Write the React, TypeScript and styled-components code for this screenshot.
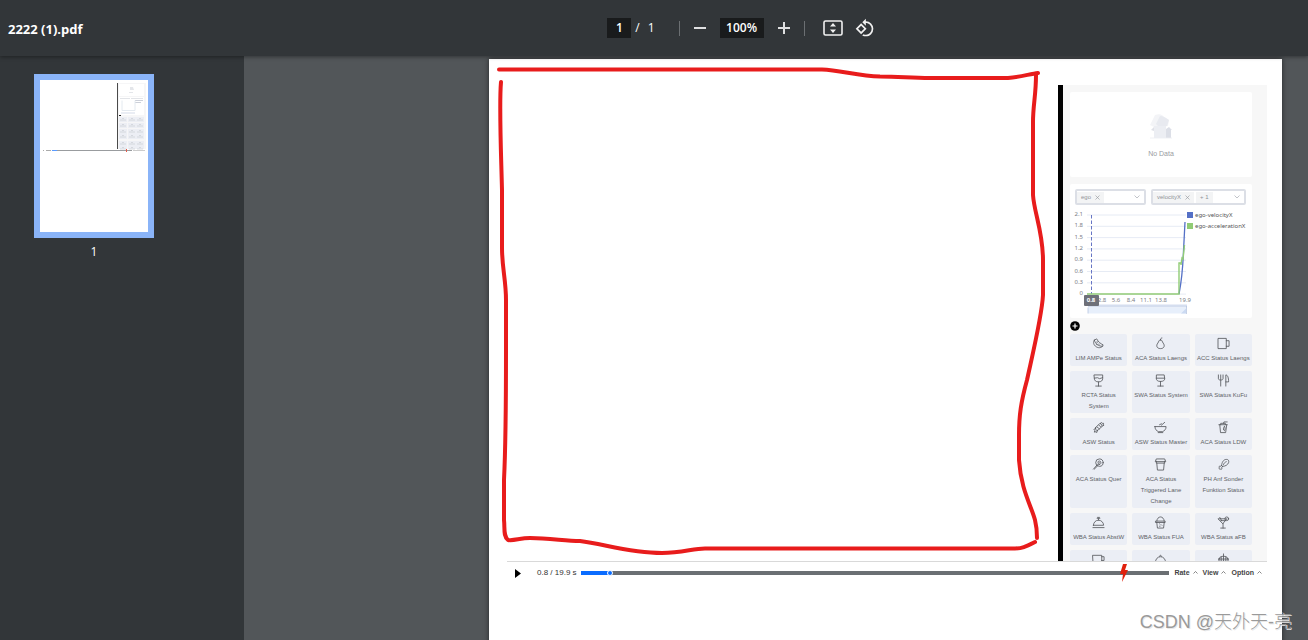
import React from "react";
import styled, { createGlobalStyle } from "styled-components";

const GlobalStyle = createGlobalStyle`
  * { box-sizing: border-box; }
  body { margin: 0; background: #525659; font-family: "Open Sans", "Noto Sans", sans-serif; }
  button, input, select { font: inherit; color: inherit; margin: 0; padding: 0; border: 0; background: none; }
  button { cursor: pointer; }
  svg { display: block; }
`;

const Shell = styled.div`
  position: relative;
  display: flex;
  flex-direction: column;
  height: 100vh;
  overflow: hidden;
`;

/* ---------- viewer toolbar ---------- */

const Toolbar = styled.header`
  position: relative;
  z-index: 3;
  flex: none;
  display: grid;
  grid-template-columns: 46% auto 1fr;
  align-items: center;
  height: 56px;
  padding: 0 8px;
  background: #323639;
  color: #fff;
  box-shadow: 0 1px 4px rgba(0, 0, 0, 0.4);
`;

const FileName = styled.h1`
  margin: 0;
  padding-top: 2px;
  font-size: 13px;
  line-height: 20px;
  font-weight: 700;
`;

const Controls = styled.div`
  display: flex;
  align-items: center;
  padding-left: 5px;
  font-size: 12px;
  line-height: 20px;
`;

const ToolInput = styled.input<{ $width: number }>`
  && {
    width: ${(p) => p.$width}px;
    height: 20px;
    background: #191b1c;
    text-align: center;
    font-weight: 600;
  }
`;

const PageTotal = styled.span`
  display: flex;
  gap: 8px;
  padding-left: 4px;
`;

const ToolDivider = styled.span<{ $left: number; $right: number }>`
  width: 1px;
  height: 15px;
  margin: 0 ${(p) => p.$right}px 0 ${(p) => p.$left}px;
  background: #6b6f72;
`;

const ToolButton = styled.button<{ $before?: number; $after?: number }>`
  && {
    display: grid;
    place-items: center;
    width: 20px;
    height: 20px;
    margin: 0 ${(p) => p.$after ?? 0}px 0 ${(p) => p.$before ?? 0}px;
  }
`;

/* ---------- viewer body ---------- */

const Body = styled.div`
  flex: 1;
  min-height: 0;
  display: flex;
`;

const Sidebar = styled.aside`
  flex: none;
  width: 244px;
  padding: 18px 34px;
  background: #323639;
`;

const Thumbnail = styled.button`
  && {
    display: block;
    width: 120px;
    color: #fff;
    font-size: 12px;
    line-height: 16px;
  }
`;

const ThumbFrame = styled.span`
  display: block;
  height: 164px;
  margin-bottom: 6px;
  border: 6px solid #8ab4f8;
  background: #fff;
`;

const Viewer = styled.main`
  flex: 1;
  min-width: 0;
  padding: 3px 26px 0 245px;
  overflow: hidden;
`;

const Page = styled.article`
  position: relative;
  min-height: 1123px;
  padding: 26px 15px 0 18px;
  background: #fff;
  box-shadow: 0 0 5px rgba(0, 0, 0, 0.55);
  font-family: "Liberation Sans", Arial, sans-serif;
`;

const Annotation = styled.svg`
  position: absolute;
  z-index: 1;
  top: 0;
  left: 0;
  pointer-events: none;
`;

const Workspace = styled.section`
  display: flex;
  height: 477px;
  border-bottom: 1px solid #d9d9d9;
  overflow: hidden;
`;

const Scene = styled.div`
  flex: 1;
`;

const Panel = styled.div`
  flex: none;
  display: flex;
  flex-direction: column;
  width: 209px;
  height: 530px;
  padding: 7px 15px 0 7px;
  border-left: 5px solid #000;
  background: #f7f7f7;
`;

const Card = styled.div<{ $height: number }>`
  flex: none;
  height: ${(p) => p.$height}px;
  margin-bottom: 7px;
  border-radius: 2px;
  background: #fff;
`;

const Empty = styled.div`
  display: flex;
  flex-direction: column;
  align-items: center;
  gap: 10px;
  padding-top: 21px;
  color: #999ca1;
  font-size: 7px;
  line-height: 10px;
`;

const Filters = styled.div`
  display: grid;
  grid-template-columns: 71px 95px;
  gap: 5px;
  padding: 5px 5px 3px;
`;

const TagSelect = styled.div`
  display: flex;
  align-items: center;
  height: 16px;
  border: 2px solid #dcdfe6;
  border-radius: 2px;
  font-size: 6px;
  line-height: 11px;
  color: #909399;
`;

const Tag = styled.span<{ $gap?: number }>`
  display: flex;
  align-items: center;
  gap: 4px;
  height: 11px;
  margin-right: ${(p) => p.$gap ?? 0}px;
  padding: 0 4px;
  background: #f3f4f5;
`;

const TagClose = styled.button`
  display: grid;
  place-items: center;
`;

const Picker = styled.select`
  && {
    flex: 1;
    min-width: 0;
    height: 12px;
    appearance: none;
  }
`;

const PickerArrow = styled.svg`
  flex: none;
  margin-right: 4px;
  pointer-events: none;
`;

const AddRow = styled.div`
  display: flex;
  height: 9px;
  margin: -5px 0 5px;
  padding-top: 1px;
`;

const AddButton = styled.button`
  width: 10px;
  height: 10px;
`;

const Tiles = styled.div`
  display: grid;
  grid-template-columns: repeat(3, 1fr);
  gap: 5px;
`;

const Tile = styled.button`
  && {
    display: flex;
    flex-direction: column;
    align-items: center;
    justify-content: flex-start;
    gap: 3px;
    min-height: 32px;
    padding: 3px 1px 1px;
    border-radius: 2px;
    background: #ebeef5;
    color: #606266;
    font-size: 6px;
    line-height: 11px;
  }
`;

/* ---------- playback bar ---------- */

const Player = styled.footer`
  display: flex;
  align-items: center;
  height: 22px;
  padding: 0 5px 0 8px;
  color: #333;
  font-size: 7px;
  line-height: 12px;
`;

const PlayButton = styled.button`
  width: 6px;
  height: 9px;
`;

const Clock = styled.span`
  width: 60px;
  padding-left: 16px;
  font-size: 8px;
  white-space: nowrap;
`;

const Timeline = styled.div`
  position: relative;
  flex: 1;
  display: flex;
  align-items: center;
  height: 22px;
`;

const Seek = styled.input`
  && {
    width: 100%;
    height: 8px;
    appearance: none;
    background: linear-gradient(to right, #0a6cff 5%, #6b6f73 5%) center / 100% 4px no-repeat;
  }
  &::-webkit-slider-thumb {
    appearance: none;
    width: 6px;
    height: 6px;
    border: 1px solid #fff;
    border-radius: 50%;
    background: #0a6cff;
  }
`;

const EventMarker = styled.svg`
  position: absolute;
  top: 2px;
  left: 92%;
  margin-left: -2px;
`;

const MenuButton = styled.button`
  && {
    display: flex;
    align-items: center;
    gap: 3px;
    margin-left: 5px;
    font-weight: 700;
    color: #444;
  }
`;

const Watermark = styled.div`
  position: absolute;
  z-index: 4;
  right: 16px;
  bottom: 6px;
  color: #9a9a9a;
  font-family: "Liberation Sans", "Noto Sans CJK SC", sans-serif;
  font-size: 18px;
  font-weight: 300;
  line-height: 24px;
  text-shadow: 1px 1px 0 #e8e8e8;
`;

/* ---------- data ---------- */

const icons: Record<string, React.ReactNode> = {
  melon: <path d="M2.500 3.500 5 2c2 3.500 4 5 7 6.500-1 3-4.500 4-7.500 2S1 5.500 2.500 3.500Zm0 0C4 8 7 10 11.500 10M5.500 5v1M7.500 7.500v.5M5 8h.5" />,
  pear: <path d="M7 3c-1.800 0-1.800 2-2.800 3.500C2 9 2.800 12.500 7 12.500S12 9 9.800 6.500C8.800 5 8.800 3 7 3Zm0 0c0-1 .5-2 1.500-2" />,
  mug: <path d="M1.500 1.500h8.500v11H1.500ZM10 4h3v6h-3" />,
  goblet: <path d="M2.500 1h9v4c0 2-1.500 3.500-4.500 3.500S2.500 7 2.500 5ZM2.500 4.500 6 4l2 1 3.500-1M7 8.500V13M4 13h6" />,
  glass: <path d="M3 1h8l.5 4c0 2-1.500 3-4.500 3S2.500 7 2.500 5ZM2.500 4.500h9M7 8v5M4 13h6" />,
  cutlery: <path d="M1.500 1v4c0 1 1 1.500 2.500 1.500S6.500 6 6.500 5V1M4 1v12M9.500 13V1c2 0 3 3 3 7.500h-3" />,
  candy: <path d="m4 7 4-4c2-.5 3 1 2.500 3l-4 4C4 10.500 3.500 9 4 7Zm1.500-.5 2.500 2M7.500 4.500l2 2M9 3l1-1.500 1 1 1.500 0-.5 1.500 1 .5-2 1M4 8l-2 1 1 1-.5 2 2-.5.5 1 1-2.500" />,
  bowl: <path d="M1 6h12c0 3-1.500 4.500-4 5.500H5C2.500 10.500 1 9 1 6ZM4.500 12.500h5M6 4l2-1M8 4.500l3.500-3" />,
  soda: <path d="M2 4h9M3 4l.8 8.500h5.500L10.500 4M4 4V2.500h5V4M7 2.500l.5-1.500H11M8 6c-1.500 1-1.500 4 0 4.500 1-1 1-3.500 0-4.500Z" />,
  lollipop: <><circle cx="8" cy="5" r="4" /><path d="m5 8-3.500 4M6 7c2 1 4-.5 3.500-2.500S6 3 6.500 5s2 1 1.500 0M5 8l1 .5L2.500 12" /></>,
  cup: <path d="M1.500 3.500 2.500 1h9l1 2.500ZM2.500 3.500v2h9v-2M3 5.500l.7 7.500h6.600l.7-7.500" />,
  drumstick: <path d="M5 8c0-3 2-6.500 5-6.500 2.500 0 3 1.500 2.500 3.500-1 2.500-3.500 4-6.500 4ZM5 8 3.500 9c-1-.5-2 .5-1 1.500-.5 1.500.5 2 1.500 1.500 1.500.5 1.500-.5 1-1.500l1-1.500M7 7c.5-1.500 1.500-2.500 3-3" />,
  cloche: <path d="M1 12.500h12M1.500 10h11c0-3-2.500-5.500-5.500-5.500S1.500 7 1.500 10ZM7 4.500V3M5.500 2.500h3M6 1.500h2" />,
  icecream: <path d="M2 5.500h10V7H2ZM3 5.500C3 3 5 1 7 1s4 2 4 4.500M3 7l.7 6h6.600L11 7M6 8.500l.5.5M8 9.500l.5.5M6 11h.5" />,
  cocktail: <><path d="M1.500 3h9L6.500 8ZM6.500 8v5M4 13h5M4 5h5M3 1.500 5 5" /><circle cx="10.500" cy="3" r="2" /></>,
  coffee: <path d="M1 2.500h9.500v7c0 1-1 2-2 2H3c-1 0-2-1-2-2ZM10.500 4H13v4h-2.500" />,
  dish: <path d="M1 12h12M1.500 10c0-3.500 2.500-6 5.500-6s5.500 2.500 5.500 6ZM6 3.500C6 2 8 2 8 3.500" />,
  basket: <path d="M1.500 6.500h11M2.500 6.500c0-2 1.500-3 4.500-3s4.500 1 4.500 3M7 1v11M4.500 4v7M9.500 4v7M2 6.500c0 3 1 5 3 5.500h4c2-.5 3-2.500 3-5.500M2 9h10" />,
};

const tiles = [
  ["melon", "LIM AMPe Status"],
  ["pear", "ACA Status Laengs"],
  ["mug", "ACC Status Laengs"],
  ["goblet", "RCTA Status System"],
  ["glass", "SWA Status System"],
  ["cutlery", "SWA Status KuFu"],
  ["candy", "ASW Status"],
  ["bowl", "ASW Status Master"],
  ["soda", "ACA Status LDW"],
  ["lollipop", "ACA Status Quer"],
  ["cup", "ACA Status Triggered Lane Change"],
  ["drumstick", "PH Anf Sonder Funktion Status"],
  ["cloche", "WBA Status AbstW"],
  ["icecream", "WBA Status FUA"],
  ["cocktail", "WBA Status aFB"],
  ["coffee", ""],
  ["dish", ""],
  ["basket", ""],
];

const yTicks = ["2.1", "1.8", "1.5", "1.2", "0.9", "0.6", "0.3", "0"];
const xTicks: [number, string][] = [
  [32, "2.8"],
  [46, "5.6"],
  [61, "8.4"],
  [76, "11.1"],
  [91, "13.8"],
  [115, "19.9"],
];

/* ---------- drawings ---------- */

const Cross = () => (
  <svg width="5" height="5" viewBox="0 0 5 5" stroke="#909399" strokeWidth="0.6">
    <path d="m.5.5 4 4m0-4-4 4" />
  </svg>
);

const Chevron = () => (
  <PickerArrow width="6" height="4" viewBox="0 0 6 4" fill="none" stroke="#a8abb2" strokeWidth="0.7">
    <path d="m.5.5 2.500 2.500L5.500.5" />
  </PickerArrow>
);

const Chart = () => (
  <svg width="182" height="108" viewBox="0 0 182 108" fontFamily='"Noto Sans", sans-serif' fontSize="6" fill="#7b7d86">
    {yTicks.map((t, i) => (
      <g key={t}>
        <path d={`M17 ${7 + i * 11.3}H116`} stroke="#e0e6f1" strokeWidth="0.8" />
        <text x="13" y={8 + i * 11.3} textAnchor="end">{t}</text>
      </g>
    ))}
    <path d="M21.500 7v79" stroke="#6675c4" strokeWidth="1" strokeDasharray="3.500 2" />
    <path d="M109 86c2-10 4-30 4.500-43L115 14" fill="none" stroke="#5470c6" strokeWidth="1.300" />
    <path d="M17 86h92V55h2v2l1-7 1 1 1.500-14" fill="none" stroke="#91cc75" strokeWidth="1.400" />
    <path d="M18 96.500h99v3H18z" fill="#d5deef" />
    <path d="M18 99.500h98v6H18z" fill="#e7effb" />
    <path d="m111 105.500 5-5v5z" fill="#cbdaf2" />
    <path d="M18 99.500v6M116.500 98v8" stroke="#b7c5e0" strokeWidth="0.8" />
    {xTicks.map(([x, t]) => (
      <text key={t} x={x} y="94" textAnchor="middle">{t}</text>
    ))}
    <rect x="14" y="87" width="15" height="11" rx="1" fill="#6e7079" />
    <text x="21" y="94" textAnchor="middle" fill="#fff" fontWeight="700">0.8</text>
    <rect x="117" y="4" width="6" height="6" fill="#5470c6" />
    <text x="125" y="9" fill="#555">ego-velocityX</text>
    <rect x="117" y="15" width="6" height="6" fill="#91cc75" />
    <text x="125" y="20" fill="#555">ego-accelerationX</text>
  </svg>
);

const ThumbDrawing = () => (
  <svg width="108" height="152" viewBox="0 0 108 152">
    <path d="M78 3h28v66H78z" fill="#f6f6f7" />
    <path d="M77 3h1v66h-1z" fill="#4a4a4a" />
    <path d="M79 4h25v12H79zM79 17h25v18H79z" fill="#fff" />
    <path d="M90 7h3l1 3h-4zM89 12h4v1h-4z" fill="#e4e6ea" />
    <path d="M80 18.500h10M91 18.500h12" stroke="#e2e4e8" />
    <path d="M95 20.500h8M95 22.500h6" stroke="#ccd0d9" />
    <path d="M82 20.500v10h13v-10" fill="none" stroke="#e4eaf0" />
    <path d="M81 33h14" stroke="#d5dbe8" />
    <path d="M79 35.500h2" stroke="#222" />
    {[37, 43, 49, 54, 61, 66].map((y) =>
      [79, 88, 96].map((x) => (
        <g key={`${x}-${y}`}>
          <rect x={x} y={y} width="8" height={y === 66 ? 3 : 5} fill="#eceef4" />
          <path d={`M${x + 3} ${y + 1.5}h2M${x + 1} ${y + 3}h6`} stroke="#cfd2d8" strokeWidth="0.8" />
        </g>
      )),
    )}
    <path d="M3 70.500h1M6 70.500h5" stroke="#aaa" />
    <path d="M12 70.500h5" stroke="#5a9bff" />
    <path d="M17 70.500h75" stroke="#999c9f" />
    <path d="M93 70.500h12" stroke="#ccc" />
    <path d="M86.500 69v3" stroke="#e45a4a" />
  </svg>
);

export default function App() {
  return (
    <Shell>
      <GlobalStyle />
      <Toolbar>
        <FileName>2222 (1).pdf</FileName>
        <Controls>
          <ToolInput $width={24} aria-label="Page number" defaultValue="1" />
          <PageTotal>
            <span>/</span>
            <span>1</span>
          </PageTotal>
          <ToolDivider $left={24} $right={10} />
          <ToolButton aria-label="Zoom out" $after={10}>
            <svg width="14" height="14" viewBox="0 0 14 14" stroke="#dfe0e1" strokeWidth="2"><path d="M1 7h12" /></svg>
          </ToolButton>
          <ToolInput $width={44} aria-label="Zoom level" defaultValue="100%" />
          <ToolButton aria-label="Zoom in" $before={10} $after={10}>
            <svg width="14" height="14" viewBox="0 0 14 14" stroke="#dfe0e1" strokeWidth="2"><path d="M1 7h12M7 1v12" /></svg>
          </ToolButton>
          <ToolDivider $left={0} $right={18} />
          <ToolButton aria-label="Fit to page" $after={12}>
            <svg width="20" height="16" viewBox="0 0 20 16" fill="none" stroke="#f1f1f1" strokeWidth="1.600">
              <rect x="1" y="1" width="18" height="14" rx="1.500" />
              <path d="M10 3 7 6.500h6ZM10 13 7 9.500h6Z" fill="#f1f1f1" stroke="none" />
            </svg>
          </ToolButton>
          <ToolButton aria-label="Rotate counterclockwise">
            <svg width="20" height="20" viewBox="0 0 24 24" fill="#f1f1f1">
              <path d="M7.340 6.410.860 12.900l6.490 6.480 6.490-6.480-6.500-6.490zM3.690 12.900l3.660-3.660L11 12.900l-3.660 3.660-3.650-3.660zm15.670-6.260A8.950 8.950 0 0 0 13 4V.760L8.760 5 13 9.240V6c1.790 0 3.580.680 4.950 2.050a7.007 7.007 0 0 1 0 9.900 6.973 6.973 0 0 1-7.790 1.440l-1.490 1.490C10.020 21.620 11.510 22 13 22c2.300 0 4.610-.880 6.360-2.640a8.980 8.980 0 0 0 0-12.720z" />
            </svg>
          </ToolButton>
        </Controls>
      </Toolbar>
      <Body>
        <Sidebar>
          <Thumbnail>
            <ThumbFrame>
              <ThumbDrawing />
            </ThumbFrame>
            1
          </Thumbnail>
        </Sidebar>
        <Viewer>
          <Page>
            <Annotation width="560" height="502" viewBox="489 59 560 502" fill="none" stroke="#e81c1c" strokeWidth="4" strokeLinecap="round" strokeLinejoin="round">
              <path d="M499 69.500H822C840 70 858 76 880 76.500C900 76.500 910 78 930 78H1008C1020 77 1030 74 1038 73" />
              <path d="M1036 75C1036 95 1033 105 1033 122V195C1034 212 1043 232 1043 260V295C1042 315 1034 348 1027 380C1021 402 1019 415 1019 435V460C1021 490 1031 505 1035 520C1037 528 1037 534 1037 538" />
              <path d="M1035 542C1025 547 1022 548.500 1015 548.500H705C693 548.500 682 553 662 553C630 553 604 544 580 541C565 541 550 538 530 538C520 538 514 541 508 540C503 536 505 528 504 520V480C506 440 506 400 506 350V300C506 280 502 268 502 248V190C501 150 499 105 501 82" />
            </Annotation>
            <Workspace>
              <Scene />
              <Panel>
                <Card $height={85}>
                  <Empty>
                    <svg width="26" height="26" viewBox="0 0 26 26">
                      <path d="m2 12 5-10c5-2 8 0 9 2l5 3-1 6-4 1H6z" fill="#f3f4f7" />
                      <path d="m8 11 4-8c3 0 6 2 9 4l-2 6h-9z" fill="#e8eaf0" />
                      <path d="M6 13h12v12H6z" fill="#eceef3" />
                      <path d="M18 16l3-2 3 3h-1v8h-5z" fill="#dcdfe7" />
                      <path d="M3 17l3-3v4z" fill="#dfe1e8" />
                      <path d="M2 25h22" stroke="#eceef2" strokeWidth="0.8" />
                    </svg>
                    No Data
                  </Empty>
                </Card>
                <Card $height={134}>
                  <Filters>
                    <TagSelect>
                      <Tag>ego<TagClose aria-label="Remove ego"><Cross /></TagClose></Tag>
                      <Picker aria-label="Object"><option></option></Picker>
                      <Chevron />
                    </TagSelect>
                    <TagSelect>
                      <Tag $gap={2}>velocityX<TagClose aria-label="Remove velocityX"><Cross /></TagClose></Tag>
                      <Tag>+ 1</Tag>
                      <Picker aria-label="Signals"><option></option></Picker>
                      <Chevron />
                    </TagSelect>
                  </Filters>
                  <Chart />
                </Card>
                <AddRow>
                  <AddButton aria-label="Add chart">
                    <svg width="10" height="10" viewBox="0 0 10 10">
                      <circle cx="5" cy="5" r="4.800" />
                      <path d="M5 2.500v5M2.500 5h5" stroke="#fff" strokeWidth="1.200" />
                    </svg>
                  </AddButton>
                </AddRow>
                <Tiles>
                  {tiles.map(([icon, label]) => (
                    <Tile key={icon} aria-label={label || icon}>
                      <svg width="13" height="13" viewBox="0 0 14 14" fill="none" stroke="#55585d" strokeWidth="0.9" strokeLinejoin="round" strokeLinecap="round">
                        {icons[icon]}
                      </svg>
                      {label}
                    </Tile>
                  ))}
                </Tiles>
              </Panel>
            </Workspace>
            <Player>
              <PlayButton aria-label="Play">
                <svg width="6" height="9" viewBox="0 0 6 9"><path d="M0 0l6 4.500L0 9z" /></svg>
              </PlayButton>
              <Clock>0.8 / 19.9 s</Clock>
              <Timeline>
                <Seek type="range" aria-label="Playback position" min={0} max={199} step={1} defaultValue={9} />
                <EventMarker width="8" height="18" viewBox="0 0 8 18"><path d="M3 0h4L5 6h3L2 18l1-8H0z" fill="#e0200c" /></EventMarker>
              </Timeline>
              {["Rate", "View", "Option"].map((name) => (
                <MenuButton key={name}>
                  {name}
                  <svg width="5" height="5" viewBox="0 0 5 5" fill="none" stroke="#555" strokeWidth="0.7"><path d="m.5 2.500 2-2 2 2" /></svg>
                </MenuButton>
              ))}
            </Player>
          </Page>
        </Viewer>
      </Body>
      <Watermark>CSDN @天外天-亮</Watermark>
    </Shell>
  );
}
